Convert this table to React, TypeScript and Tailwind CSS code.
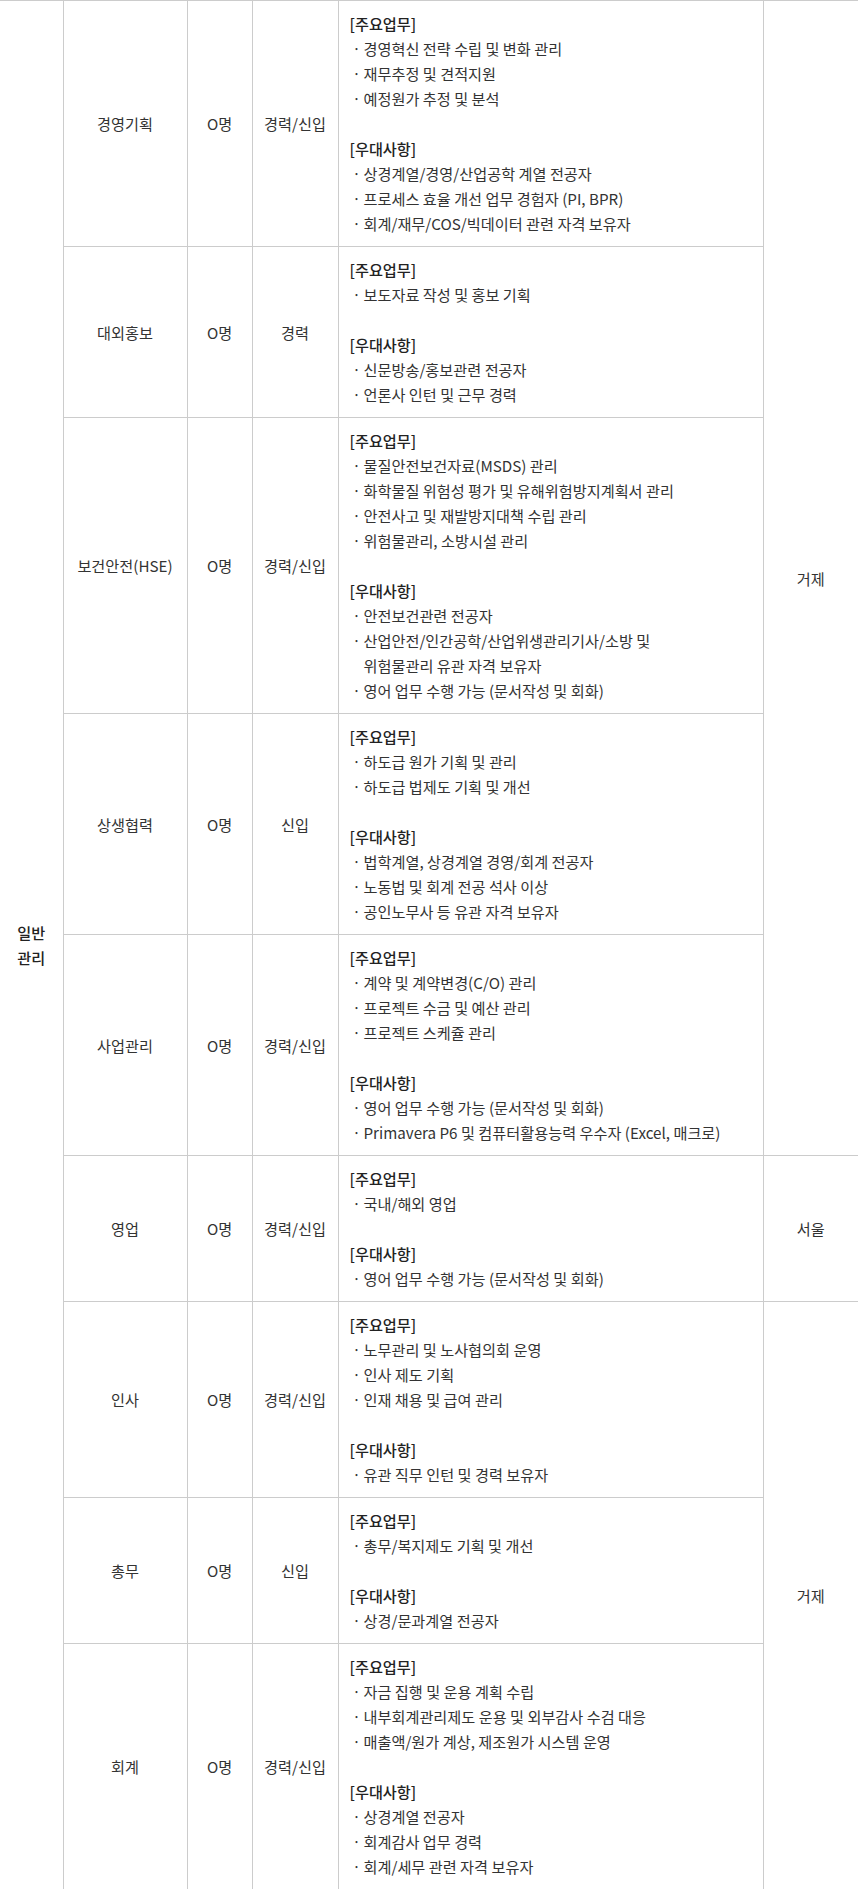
import React from 'react'

interface Job {
  name: string
  count: string
  type: string
  duties: string[]
  prefs: string[][]
  location?: { name: string; span: number }
}

const jobs: Job[] = [
  {
    name: '경영기획',
    count: 'O명',
    type: '경력/신입',
    duties: ['경영혁신 전략 수립 및 변화 관리', '재무추정 및 견적지원', '예정원가 추정 및 분석'],
    prefs: [
      ['상경계열/경영/산업공학 계열 전공자'],
      ['프로세스 효율 개선 업무 경험자 (PI, BPR)'],
      ['회계/재무/COS/빅데이터 관련 자격 보유자'],
    ],
    location: { name: '거제', span: 5 },
  },
  {
    name: '대외홍보',
    count: 'O명',
    type: '경력',
    duties: ['보도자료 작성 및 홍보 기획'],
    prefs: [['신문방송/홍보관련 전공자'], ['언론사 인턴 및 근무 경력']],
  },
  {
    name: '보건안전(HSE)',
    count: 'O명',
    type: '경력/신입',
    duties: [
      '물질안전보건자료(MSDS) 관리',
      '화학물질 위험성 평가 및 유해위험방지계획서 관리',
      '안전사고 및 재발방지대책 수립 관리',
      '위험물관리, 소방시설 관리',
    ],
    prefs: [
      ['안전보건관련 전공자'],
      ['산업안전/인간공학/산업위생관리기사/소방 및', '위험물관리 유관 자격 보유자'],
      ['영어 업무 수행 가능 (문서작성 및 회화)'],
    ],
  },
  {
    name: '상생협력',
    count: 'O명',
    type: '신입',
    duties: ['하도급 원가 기획 및 관리', '하도급 법제도 기획 및 개선'],
    prefs: [
      ['법학계열, 상경계열 경영/회계 전공자'],
      ['노동법 및 회계 전공 석사 이상'],
      ['공인노무사 등 유관 자격 보유자'],
    ],
  },
  {
    name: '사업관리',
    count: 'O명',
    type: '경력/신입',
    duties: ['계약 및 계약변경(C/O) 관리', '프로젝트 수금 및 예산 관리', '프로젝트 스케쥴 관리'],
    prefs: [
      ['영어 업무 수행 가능 (문서작성 및 회화)'],
      ['Primavera P6 및 컴퓨터활용능력 우수자 (Excel, 매크로)'],
    ],
  },
  {
    name: '영업',
    count: 'O명',
    type: '경력/신입',
    duties: ['국내/해외 영업'],
    prefs: [['영어 업무 수행 가능 (문서작성 및 회화)']],
    location: { name: '서울', span: 1 },
  },
  {
    name: '인사',
    count: 'O명',
    type: '경력/신입',
    duties: ['노무관리 및 노사협의회 운영', '인사 제도 기획', '인재 채용 및 급여 관리'],
    prefs: [['유관 직무 인턴 및 경력 보유자']],
    location: { name: '거제', span: 3 },
  },
  {
    name: '총무',
    count: 'O명',
    type: '신입',
    duties: ['총무/복지제도 기획 및 개선'],
    prefs: [['상경/문과계열 전공자']],
  },
  {
    name: '회계',
    count: 'O명',
    type: '경력/신입',
    duties: [
      '자금 집행 및 운용 계획 수립',
      '내부회계관리제도 운용 및 외부감사 수검 대응',
      '매출액/원가 계상, 제조원가 시스템 운영',
    ],
    prefs: [['상경계열 전공자'], ['회계감사 업무 경력'], ['회계/세무 관련 자격 보유자']],
  },
]

// bullet row, second line (if any) hangs under the text
const Bullet = ({ lines }: { lines: string[] }) => (
  <div className="flex">
    <span className="w-[14px] shrink-0 text-center">·</span>
    <span>
      {lines.map((l, i) => (
        <div key={i}>{l}</div>
      ))}
    </span>
  </div>
)

const cell = 'border border-[#cccccc] text-center'

export default function App() {
  return (
    <div className="w-[858px] bg-white font-['Noto_Sans_CJK_KR','Noto_Sans',sans-serif] text-[15.2px] leading-[25px] text-[#333333]">
      <table className="w-[858px] table-fixed border-collapse">
        <colgroup>
          <col className="w-[63px]" />
          <col className="w-[124px]" />
          <col className="w-[65px]" />
          <col className="w-[86px]" />
          <col className="w-[425px]" />
          <col className="w-[95px]" />
        </colgroup>
        <tbody>
          {jobs.map((job, idx) => (
            <tr key={job.name}>
              {idx === 0 && (
                <td rowSpan={jobs.length} className={`${cell} border-l-0 font-medium text-[#222222]`}>
                  일반
                  <br />
                  관리
                </td>
              )}
              <td className={cell}>{job.name}</td>
              <td className={cell}>{job.count}</td>
              <td className={cell}>{job.type}</td>
              <td className="border border-[#cccccc] py-[10px] px-[11px] text-left">
                <div className="font-medium text-[#222222]">[주요업무]</div>
                {job.duties.map((d) => (
                  <Bullet key={d} lines={[d]} />
                ))}
                <div className="h-[25px]" />
                <div className="font-medium text-[#222222]">[우대사항]</div>
                {job.prefs.map((p) => (
                  <Bullet key={p[0]} lines={p} />
                ))}
              </td>
              {job.location && (
                <td rowSpan={job.location.span} className={`${cell} border-r-0`}>
                  {job.location.name}
                </td>
              )}
            </tr>
          ))}
        </tbody>
      </table>
    </div>
  )
}
